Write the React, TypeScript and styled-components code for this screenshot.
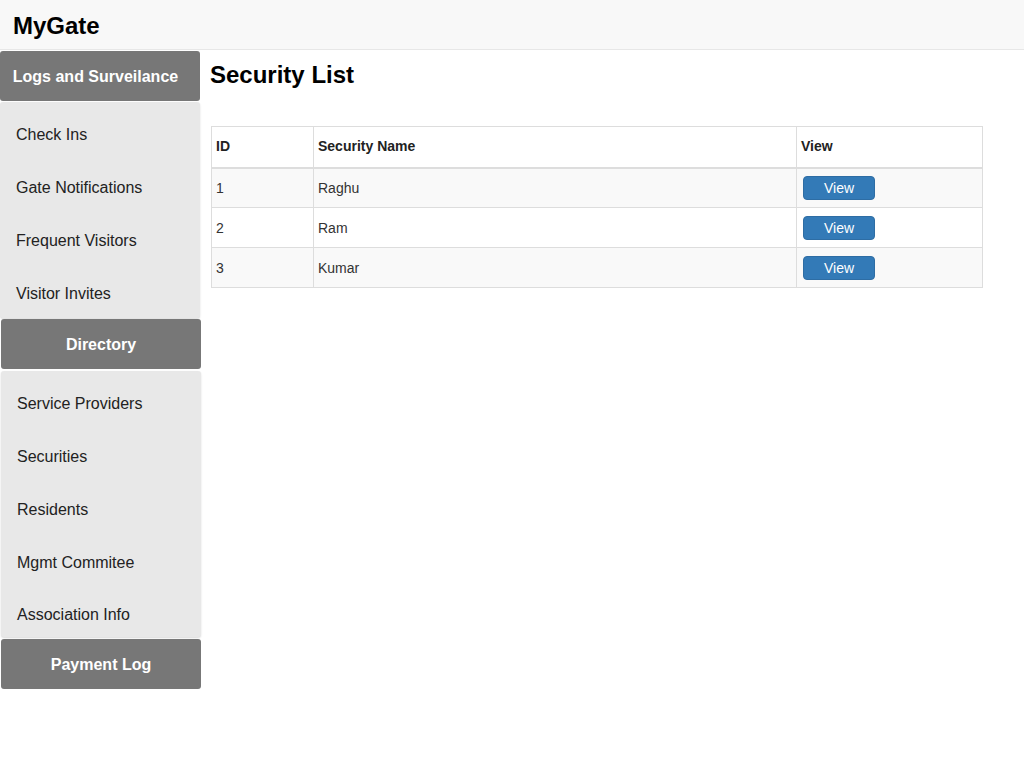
import React from "react";
import styled, { createGlobalStyle } from "styled-components";

const GlobalStyle = createGlobalStyle`
  html, body { margin: 0; padding: 0; background: #fff; }
  body { font-family: "Liberation Sans", Arial, sans-serif; color: #333; }
  * { box-sizing: border-box; }
`;

const Page = styled.div`
  width: 1024px;
  min-height: 768px;
  display: flex;
  flex-direction: column;
`;

const Header = styled.header`
  height: 50px;
  background: #f8f8f8;
  border-bottom: 1px solid #e7e7e7;
  display: flex;
  align-items: center;
  padding-left: 13px;
`;

const Brand = styled.div`
  font-size: 24px;
  font-weight: bold;
  color: #000;
  margin-top: 2px;
`;

const Body = styled.div`
  display: flex;
  align-items: flex-start;
`;

const Sidebar = styled.nav`
  width: 201px;
  display: flex;
  flex-direction: column;
  padding-top: 1px;
`;

const SectionButton = styled.div<{ $shift?: number }>`
  height: 50px;
  width: 200px;
  margin-left: ${(p) => p.$shift ?? 1}px;
  background: #777;
  border-radius: 3px;
  color: #fff;
  font-weight: bold;
  font-size: 16px;
  display: flex;
  align-items: center;
  justify-content: center;
  padding-top: 2px;
  padding-right: ${(p) => (p.$shift === 0 ? 9 : 0)}px;
`;

const Panel = styled.div<{ $shift?: number; $h: number; $gap: number }>`
  width: 200px;
  height: ${(p) => p.$h}px;
  overflow: hidden;
  margin: ${(p) => p.$gap}px 0 ${(p) => p.$gap}px ${(p) => p.$shift ?? 0}px;
  background: #e8e8e8;
  border-radius: 3px;
  box-shadow: 0 1px 2px rgba(0, 0, 0, 0.15);
  display: flex;
  flex-direction: column;
  padding: 7px 0 0;
`;

const NavItem = styled.div`
  height: 52.75px;
  flex-shrink: 0;
  display: flex;
  align-items: center;
  padding-left: 16px;
  font-size: 16px;
  color: #222;
`;

const Main = styled.main`
  flex: 1;
  padding: 11px 0 0 9px;
`;

const Title = styled.h2`
  margin: 0;
  font-size: 24px;
  font-weight: bold;
  color: #000;
  line-height: 28px;
`;

const Table = styled.table`
  margin-top: 37px;
  margin-left: 1px;
  width: 772px;
  border-collapse: collapse;
  font-size: 14px;
  color: #333;
`;

const Th = styled.th<{ $w?: number }>`
  height: 41px;
  text-align: left;
  padding: 0 4px 2px;
  font-weight: bold;
  border: 1px solid #ddd;
  border-bottom: 2px solid #ddd;
  width: ${(p) => (p.$w ? `${p.$w}px` : "auto")};
  color: #222;
`;

const Tr = styled.tr<{ $odd: boolean }>`
  background: ${(p) => (p.$odd ? "#f9f9f9" : "#fff")};
`;

const Td = styled.td`
  height: 40px;
  padding: 0 4px;
  border: 1px solid #ddd;
`;

const ViewButton = styled.button`
  margin-left: 2px;
  width: 72px;
  height: 24px;
  background: #337ab7;
  border: 1px solid #2e6da4;
  border-radius: 4px;
  color: #fff;
  font-family: "Liberation Sans", Arial, sans-serif;
  font-size: 14px;
  padding: 0;
  line-height: 20px;
  display: block;
`;

const rows = [
  { id: 1, name: "Raghu" },
  { id: 2, name: "Ram" },
  { id: 3, name: "Kumar" },
];

export default function App() {
  return (
    <>
      <GlobalStyle />
      <Page>
        <Header>
          <Brand>MyGate</Brand>
        </Header>
        <Body>
          <Sidebar>
            <SectionButton $shift={0}>Logs and Surveilance</SectionButton>
            <Panel $h={216} $gap={1}>
              <NavItem>Check Ins</NavItem>
              <NavItem>Gate Notifications</NavItem>
              <NavItem>Frequent Visitors</NavItem>
              <NavItem>Visitor Invites</NavItem>
            </Panel>
            <SectionButton>Directory</SectionButton>
            <Panel $shift={1} $h={266} $gap={2}>
              <NavItem>Service Providers</NavItem>
              <NavItem>Securities</NavItem>
              <NavItem>Residents</NavItem>
              <NavItem>Mgmt Commitee</NavItem>
              <NavItem>Association Info</NavItem>
            </Panel>
            <SectionButton>Payment Log</SectionButton>
          </Sidebar>
          <Main>
            <Title>Security List</Title>
            <Table>
              <thead>
                <tr>
                  <Th $w={102}>ID</Th>
                  <Th $w={483}>Security Name</Th>
                  <Th>View</Th>
                </tr>
              </thead>
              <tbody>
                {rows.map((r, i) => (
                  <Tr key={r.id} $odd={i % 2 === 0}>
                    <Td>{r.id}</Td>
                    <Td>{r.name}</Td>
                    <Td>
                      <ViewButton>View</ViewButton>
                    </Td>
                  </Tr>
                ))}
              </tbody>
            </Table>
          </Main>
        </Body>
      </Page>
    </>
  );
}
